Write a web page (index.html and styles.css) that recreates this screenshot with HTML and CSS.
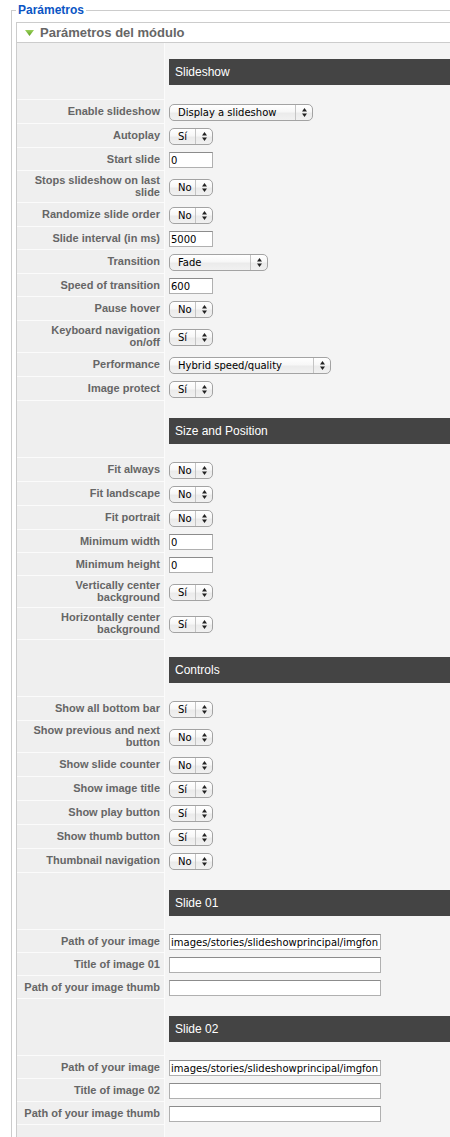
FILE: index.html
```html
<!DOCTYPE html>
<html lang="es">
<head>
<meta charset="utf-8">
<title>Parámetros del módulo</title>
<link rel="stylesheet" href="styles.css">
</head>
<body>
<div class="page">
  <fieldset class="adminform">
    <legend>Parámetros</legend>
    <div class="panel">
      <h3 class="panel-title"><svg class="toggle" width="9" height="6" viewBox="0 0 9 6"><defs><linearGradient id="tg" x1="0" y1="0" x2="0" y2="1"><stop offset="0" stop-color="#9ad15a"/><stop offset="1" stop-color="#5e9f23"/></linearGradient></defs><polygon points="0,0 9,0 4.5,6" fill="url(#tg)"/></svg>Parámetros del módulo</h3>
      <div class="params">

        <div class="row head"><div class="key"></div><div class="val"><div class="bar">Slideshow</div></div></div>
        <div class="row"><div class="key">Enable slideshow</div><div class="val"><span class="sel sel-l"><span class="sel-v">Display a slideshow</span><span class="sel-a"><svg width="5" height="9" viewBox="0 0 5 9"><polygon points="0,3.5 2.5,0 5,3.5"/><polygon points="0,5.5 5,5.5 2.5,9"/></svg></span></span></div></div>
        <div class="row"><div class="key">Autoplay</div><div class="val"><span class="sel sel-s"><span class="sel-v">Sí</span><span class="sel-a"><svg width="5" height="9" viewBox="0 0 5 9"><polygon points="0,3.5 2.5,0 5,3.5"/><polygon points="0,5.5 5,5.5 2.5,9"/></svg></span></span></div></div>
        <div class="row"><div class="key">Start slide</div><div class="val"><input class="txt txt-s" type="text" value="0"></div></div>
        <div class="row"><div class="key">Stops slideshow on last slide</div><div class="val"><span class="sel sel-s"><span class="sel-v">No</span><span class="sel-a"><svg width="5" height="9" viewBox="0 0 5 9"><polygon points="0,3.5 2.5,0 5,3.5"/><polygon points="0,5.5 5,5.5 2.5,9"/></svg></span></span></div></div>
        <div class="row"><div class="key">Randomize slide order</div><div class="val"><span class="sel sel-s"><span class="sel-v">No</span><span class="sel-a"><svg width="5" height="9" viewBox="0 0 5 9"><polygon points="0,3.5 2.5,0 5,3.5"/><polygon points="0,5.5 5,5.5 2.5,9"/></svg></span></span></div></div>
        <div class="row"><div class="key">Slide interval (in ms)</div><div class="val"><input class="txt txt-s" type="text" value="5000"></div></div>
        <div class="row"><div class="key">Transition</div><div class="val"><span class="sel sel-m"><span class="sel-v">Fade</span><span class="sel-a"><svg width="5" height="9" viewBox="0 0 5 9"><polygon points="0,3.5 2.5,0 5,3.5"/><polygon points="0,5.5 5,5.5 2.5,9"/></svg></span></span></div></div>
        <div class="row"><div class="key">Speed of transition</div><div class="val"><input class="txt txt-s" type="text" value="600"></div></div>
        <div class="row"><div class="key">Pause hover</div><div class="val"><span class="sel sel-s"><span class="sel-v">No</span><span class="sel-a"><svg width="5" height="9" viewBox="0 0 5 9"><polygon points="0,3.5 2.5,0 5,3.5"/><polygon points="0,5.5 5,5.5 2.5,9"/></svg></span></span></div></div>
        <div class="row"><div class="key">Keyboard navigation on/off</div><div class="val"><span class="sel sel-s"><span class="sel-v">Sí</span><span class="sel-a"><svg width="5" height="9" viewBox="0 0 5 9"><polygon points="0,3.5 2.5,0 5,3.5"/><polygon points="0,5.5 5,5.5 2.5,9"/></svg></span></span></div></div>
        <div class="row"><div class="key">Performance</div><div class="val"><span class="sel sel-xl"><span class="sel-v">Hybrid speed/quality</span><span class="sel-a"><svg width="5" height="9" viewBox="0 0 5 9"><polygon points="0,3.5 2.5,0 5,3.5"/><polygon points="0,5.5 5,5.5 2.5,9"/></svg></span></span></div></div>
        <div class="row"><div class="key">Image protect</div><div class="val"><span class="sel sel-s"><span class="sel-v">Sí</span><span class="sel-a"><svg width="5" height="9" viewBox="0 0 5 9"><polygon points="0,3.5 2.5,0 5,3.5"/><polygon points="0,5.5 5,5.5 2.5,9"/></svg></span></span></div></div>

        <div class="row head"><div class="key"></div><div class="val"><div class="bar">Size and Position</div></div></div>
        <div class="row"><div class="key">Fit always</div><div class="val"><span class="sel sel-s"><span class="sel-v">No</span><span class="sel-a"><svg width="5" height="9" viewBox="0 0 5 9"><polygon points="0,3.5 2.5,0 5,3.5"/><polygon points="0,5.5 5,5.5 2.5,9"/></svg></span></span></div></div>
        <div class="row"><div class="key">Fit landscape</div><div class="val"><span class="sel sel-s"><span class="sel-v">No</span><span class="sel-a"><svg width="5" height="9" viewBox="0 0 5 9"><polygon points="0,3.5 2.5,0 5,3.5"/><polygon points="0,5.5 5,5.5 2.5,9"/></svg></span></span></div></div>
        <div class="row"><div class="key">Fit portrait</div><div class="val"><span class="sel sel-s"><span class="sel-v">No</span><span class="sel-a"><svg width="5" height="9" viewBox="0 0 5 9"><polygon points="0,3.5 2.5,0 5,3.5"/><polygon points="0,5.5 5,5.5 2.5,9"/></svg></span></span></div></div>
        <div class="row"><div class="key">Minimum width</div><div class="val"><input class="txt txt-s" type="text" value="0"></div></div>
        <div class="row"><div class="key">Minimum height</div><div class="val"><input class="txt txt-s" type="text" value="0"></div></div>
        <div class="row"><div class="key">Vertically center background</div><div class="val"><span class="sel sel-s"><span class="sel-v">Sí</span><span class="sel-a"><svg width="5" height="9" viewBox="0 0 5 9"><polygon points="0,3.5 2.5,0 5,3.5"/><polygon points="0,5.5 5,5.5 2.5,9"/></svg></span></span></div></div>
        <div class="row"><div class="key">Horizontally center background</div><div class="val"><span class="sel sel-s"><span class="sel-v">Sí</span><span class="sel-a"><svg width="5" height="9" viewBox="0 0 5 9"><polygon points="0,3.5 2.5,0 5,3.5"/><polygon points="0,5.5 5,5.5 2.5,9"/></svg></span></span></div></div>

        <div class="row head"><div class="key"></div><div class="val"><div class="bar">Controls</div></div></div>
        <div class="row"><div class="key">Show all bottom bar</div><div class="val"><span class="sel sel-s"><span class="sel-v">Sí</span><span class="sel-a"><svg width="5" height="9" viewBox="0 0 5 9"><polygon points="0,3.5 2.5,0 5,3.5"/><polygon points="0,5.5 5,5.5 2.5,9"/></svg></span></span></div></div>
        <div class="row"><div class="key">Show previous and next button</div><div class="val"><span class="sel sel-s"><span class="sel-v">No</span><span class="sel-a"><svg width="5" height="9" viewBox="0 0 5 9"><polygon points="0,3.5 2.5,0 5,3.5"/><polygon points="0,5.5 5,5.5 2.5,9"/></svg></span></span></div></div>
        <div class="row"><div class="key">Show slide counter</div><div class="val"><span class="sel sel-s"><span class="sel-v">No</span><span class="sel-a"><svg width="5" height="9" viewBox="0 0 5 9"><polygon points="0,3.5 2.5,0 5,3.5"/><polygon points="0,5.5 5,5.5 2.5,9"/></svg></span></span></div></div>
        <div class="row"><div class="key">Show image title</div><div class="val"><span class="sel sel-s"><span class="sel-v">Sí</span><span class="sel-a"><svg width="5" height="9" viewBox="0 0 5 9"><polygon points="0,3.5 2.5,0 5,3.5"/><polygon points="0,5.5 5,5.5 2.5,9"/></svg></span></span></div></div>
        <div class="row"><div class="key">Show play button</div><div class="val"><span class="sel sel-s"><span class="sel-v">Sí</span><span class="sel-a"><svg width="5" height="9" viewBox="0 0 5 9"><polygon points="0,3.5 2.5,0 5,3.5"/><polygon points="0,5.5 5,5.5 2.5,9"/></svg></span></span></div></div>
        <div class="row"><div class="key">Show thumb button</div><div class="val"><span class="sel sel-s"><span class="sel-v">Sí</span><span class="sel-a"><svg width="5" height="9" viewBox="0 0 5 9"><polygon points="0,3.5 2.5,0 5,3.5"/><polygon points="0,5.5 5,5.5 2.5,9"/></svg></span></span></div></div>
        <div class="row"><div class="key">Thumbnail navigation</div><div class="val"><span class="sel sel-s"><span class="sel-v">No</span><span class="sel-a"><svg width="5" height="9" viewBox="0 0 5 9"><polygon points="0,3.5 2.5,0 5,3.5"/><polygon points="0,5.5 5,5.5 2.5,9"/></svg></span></span></div></div>

        <div class="row head"><div class="key"></div><div class="val"><div class="bar">Slide 01</div></div></div>
        <div class="row"><div class="key">Path of your image</div><div class="val"><input class="txt txt-l" type="text" value="images/stories/slideshowprincipal/imgfon"></div></div>
        <div class="row"><div class="key">Title of image 01</div><div class="val"><input class="txt txt-l" type="text" value=""></div></div>
        <div class="row"><div class="key">Path of your image thumb</div><div class="val"><input class="txt txt-l" type="text" value=""></div></div>

        <div class="row head"><div class="key"></div><div class="val"><div class="bar">Slide 02</div></div></div>
        <div class="row"><div class="key">Path of your image</div><div class="val"><input class="txt txt-l" type="text" value="images/stories/slideshowprincipal/imgfon"></div></div>
        <div class="row"><div class="key">Title of image 02</div><div class="val"><input class="txt txt-l" type="text" value=""></div></div>
        <div class="row"><div class="key">Path of your image thumb</div><div class="val"><input class="txt txt-l" type="text" value=""></div></div>

        <div class="row tail"><div class="key"></div><div class="val"></div></div>
      </div>
    </div>
  </fieldset>
</div>
</body>
</html>
```

FILE: styles.css
```css
html, body {
  margin: 0;
  padding: 0;
  background: #fff;
  overflow: hidden;
}

body {
  width: 450px;
  height: 1137px;
}

.page {
  width: 760px;
  padding-left: 11px;
  font-family: "Liberation Sans", Arial, sans-serif;
}

.adminform {
  margin: 0;
  padding: 2px 4px 0 4px;
  border: 1px solid #cccccc;
  border-bottom: none;
  min-width: 0;
}

.adminform legend {
  padding: 0 2px;
  font-size: 12px;
  line-height: 20px;
  font-weight: bold;
  color: #0b55c4;
}

.panel {
  border: 1px solid #cccccc;
  background: #f4f4f4;
}

.panel-title {
  margin: 0;
  height: 19px;
  border-bottom: 1px solid #cccccc;
  background: #ffffff;
  display: flex;
  align-items: center;
  font-size: 13px;
  font-weight: bold;
  color: #666666;
}

.toggle {
  margin-left: 8px;
  margin-right: 6px;
}

.row {
  display: flex;
}

.key {
  flex: 0 0 148px;
  box-sizing: border-box;
  border-right: 1px solid #fbfbfb;
  border-bottom: 1px solid #fbfbfb;
  background: #efefef;
  padding: 3px 4px 4px;
  display: flex;
  align-items: center;
  justify-content: flex-end;
  text-align: right;
  font-size: 11px;
  line-height: 12px;
  font-weight: bold;
  color: #666666;
}

.val {
  flex: 1;
  padding: 4px 4px 3px;
  display: flex;
  align-items: center;
}

.head .val {
  display: block;
  padding: 17px 0 14px 4px;
}

.head:first-child .val {
  padding-top: 16px;
  padding-bottom: 15px;
}

.bar {
  height: 26px;
  line-height: 26px;
  background: #444444;
  color: #ffffff;
  font-size: 12px;
  padding-left: 6px;
}

.tail .key {
  height: 20px;
}

.sel {
  display: inline-flex;
  box-sizing: border-box;
  height: 17px;
  border: 1px solid #a3a3a3;
  border-radius: 5px;
  background: linear-gradient(#ffffff 0%, #f7f7f7 45%, #ebebeb 55%, #f1f1f1 100%);
  font-family: "DejaVu Sans", sans-serif;
  font-size: 10px;
  color: #000;
}

.sel-s { width: 44px; }
.sel-m { width: 99px; }
.sel-l { width: 144px; }
.sel-xl { width: 162px; }

.sel-v {
  flex: 1;
  padding-left: 8px;
  line-height: 15px;
  white-space: nowrap;
  overflow: hidden;
}

.sel-a {
  flex: 0 0 16px;
  border-left: 1px solid #c4c4c4;
  display: flex;
  align-items: center;
  justify-content: center;
}

.sel-a svg {
  fill: #222222;
}

.txt {
  box-sizing: border-box;
  height: 16px;
  margin: 0;
  border: 1px solid #b0b0b0;
  border-top-color: #8c8c8c;
  background: #ffffff;
  padding: 0 1px;
  font-family: "DejaVu Sans", sans-serif;
  font-size: 10px;
  color: #000;
  outline: none;
}

.txt-s { width: 44px; }
.txt-l { width: 212px; }
```
